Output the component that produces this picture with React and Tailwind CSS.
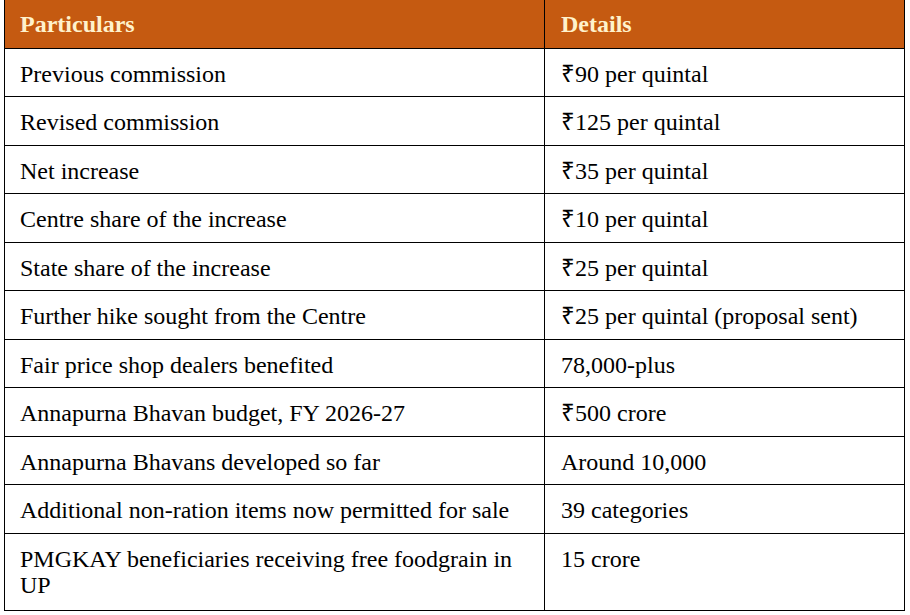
import React from "react";

const rows = [
  ["Previous commission", "₹90 per quintal"],
  ["Revised commission", "₹125 per quintal"],
  ["Net increase", "₹35 per quintal"],
  ["Centre share of the increase", "₹10 per quintal"],
  ["State share of the increase", "₹25 per quintal"],
  ["Further hike sought from the Centre", "₹25 per quintal (proposal sent)"],
  ["Fair price shop dealers benefited", "78,000-plus"],
  ["Annapurna Bhavan budget, FY 2026-27", "₹500 crore"],
  ["Annapurna Bhavans developed so far", "Around 10,000"],
  ["Additional non-ration items now permitted for sale", "39 categories"],
  ["PMGKAY beneficiaries receiving free foodgrain in UP", "15 crore"],
];

export default function App() {
  return (
    <div className="w-[910px] h-[615px] bg-white overflow-hidden font-['Liberation_Serif','Times_New_Roman',serif] text-black">
      <table className="ml-[4px] w-[901px] border-collapse table-fixed">
        <colgroup>
          <col className="w-[540px]" />
          <col />
        </colgroup>
        <thead>
          {/* header row */}
          <tr className="h-[48px] bg-[#c55a11] text-[#fff2cc]">
            <th className="border border-black border-t-0 px-[15px] text-left align-middle text-[24px] leading-[26.5px] font-bold">
              Particulars
            </th>
            <th className="border border-black border-t-0 px-[16px] text-left align-middle text-[24px] leading-[26.5px] font-bold">
              Details
            </th>
          </tr>
        </thead>
        <tbody>
          {rows.map(([label, value], i) => {
            const last = i === rows.length - 1;
            return (
              <tr key={label} className="h-[48.5px]">
                <td className={last ? "border border-black px-[15px] pt-[12px] pb-[11px] align-top text-[24px] leading-[26.5px]" : "border border-black px-[15px] pt-[12px] pb-[9px] align-top text-[24px] leading-[26.5px]"}>
                  {label}
                </td>
                <td className={last ? "border border-black px-[16px] pt-[12px] pb-[11px] align-top text-[24px] leading-[26.5px]" : "border border-black px-[16px] pt-[12px] pb-[9px] align-top text-[24px] leading-[26.5px]"}>
                  {value}
                </td>
              </tr>
            );
          })}
        </tbody>
      </table>
    </div>
  );
}
